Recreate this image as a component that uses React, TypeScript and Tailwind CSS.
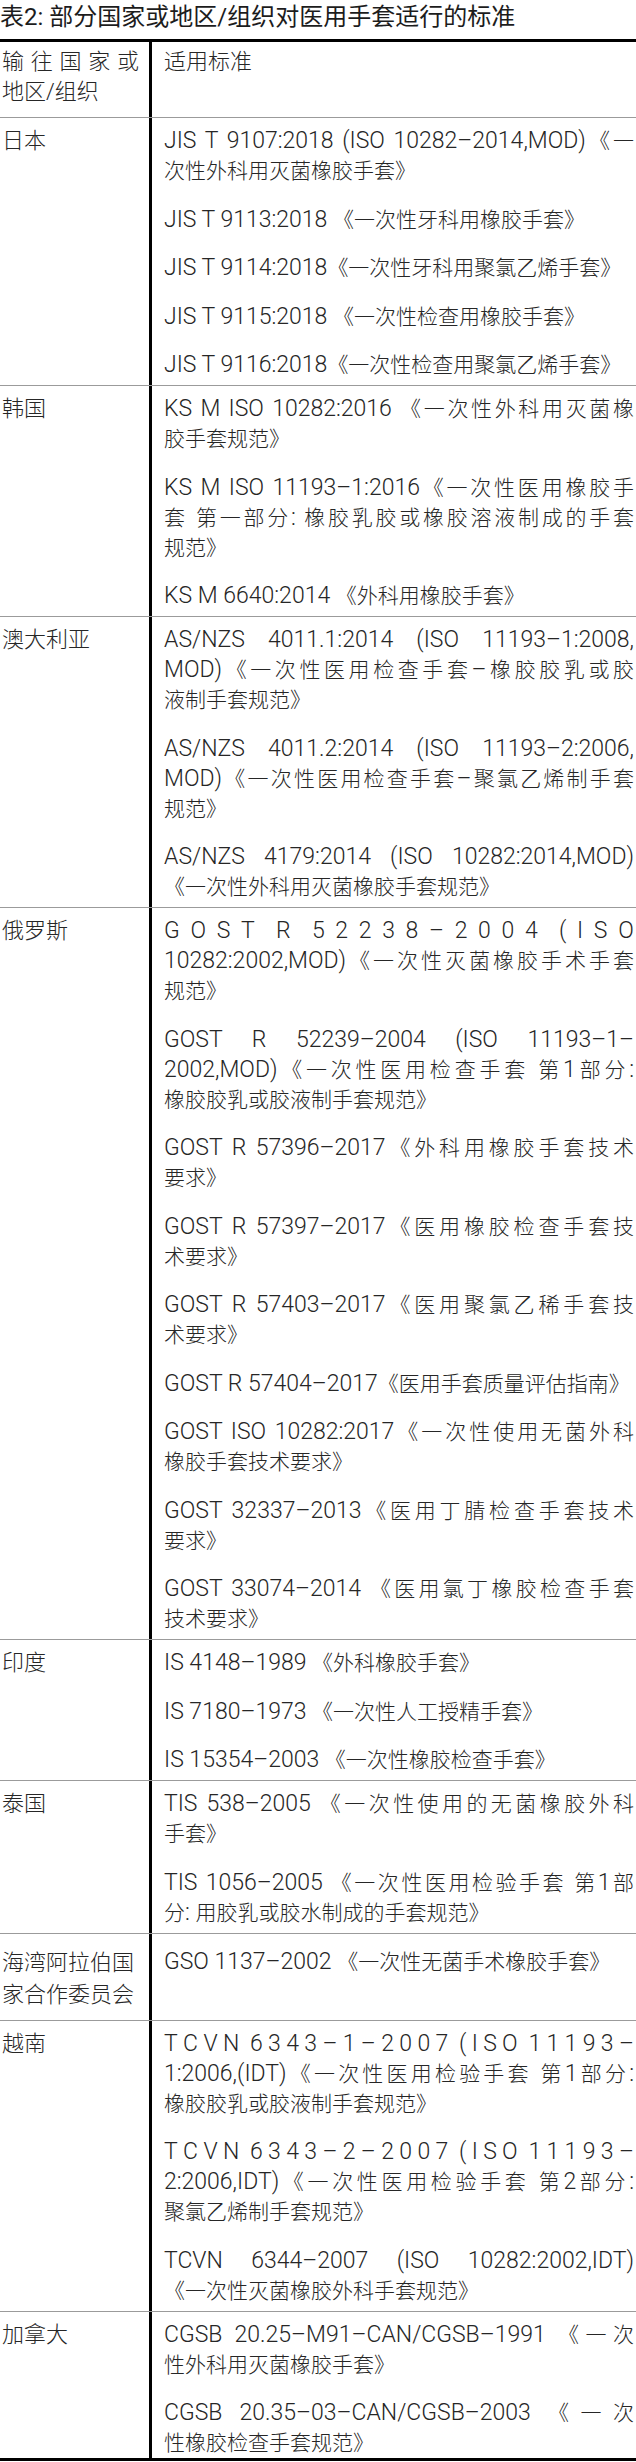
import React from 'react';

// A line is either plain text, or a line whose characters are spread over the full width
type Line = string | { spread: string };

interface Row {
  region: string[];
  items: Line[][];
  gulf?: boolean;
}

const rows: Row[] = [
  {
    region: ['日本'],
    items: [
      ['JIS T 9107:2018 (ISO 10282–2014,MOD)《一', '次性外科用灭菌橡胶手套》'],
      ['JIS T 9113:2018 《一次性牙科用橡胶手套》'],
      ['JIS T 9114:2018《一次性牙科用聚氯乙烯手套》'],
      ['JIS T 9115:2018 《一次性检查用橡胶手套》'],
      ['JIS T 9116:2018《一次性检查用聚氯乙烯手套》'],
    ],
  },
  {
    region: ['韩国'],
    items: [
      ['KS M ISO 10282:2016 《一次性外科用灭菌橡', '胶手套规范》'],
      ['KS M ISO 11193–1:2016《一次性医用橡胶手', '套 第一部分: 橡胶乳胶或橡胶溶液制成的手套', '规范》'],
      ['KS M 6640:2014 《外科用橡胶手套》'],
    ],
  },
  {
    region: ['澳大利亚'],
    items: [
      ['AS/NZS 4011.1:2014 (ISO 11193–1:2008,', 'MOD)《一次性医用检查手套–橡胶胶乳或胶', '液制手套规范》'],
      ['AS/NZS 4011.2:2014 (ISO 11193–2:2006,', 'MOD)《一次性医用检查手套–聚氯乙烯制手套', '规范》'],
      ['AS/NZS 4179:2014 (ISO 10282:2014,MOD)', '《一次性外科用灭菌橡胶手套规范》'],
    ],
  },
  {
    region: ['俄罗斯'],
    items: [
      [{ spread: 'GOST R 52238–2004 (ISO' }, '10282:2002,MOD)《一次性灭菌橡胶手术手套', '规范》'],
      ['GOST R 52239–2004 (ISO 11193–1–', '2002,MOD)《一次性医用检查手套 第1部分:', '橡胶胶乳或胶液制手套规范》'],
      ['GOST R 57396–2017《外科用橡胶手套技术', '要求》'],
      ['GOST R 57397–2017《医用橡胶检查手套技', '术要求》'],
      ['GOST R 57403–2017《医用聚氯乙稀手套技', '术要求》'],
      ['GOST R 57404–2017《医用手套质量评估指南》'],
      ['GOST ISO 10282:2017《一次性使用无菌外科', '橡胶手套技术要求》'],
      ['GOST 32337–2013《医用丁腈检查手套技术', '要求》'],
      ['GOST 33074–2014 《医用氯丁橡胶检查手套', '技术要求》'],
    ],
  },
  {
    region: ['印度'],
    items: [
      ['IS 4148–1989 《外科橡胶手套》'],
      ['IS 7180–1973 《一次性人工授精手套》'],
      ['IS 15354–2003 《一次性橡胶检查手套》'],
    ],
  },
  {
    region: ['泰国'],
    items: [
      ['TIS 538–2005 《一次性使用的无菌橡胶外科', '手套》'],
      ['TIS 1056–2005 《一次性医用检验手套 第1部', '分: 用胶乳或胶水制成的手套规范》'],
    ],
  },
  {
    region: ['海湾阿拉伯国', '家合作委员会'],
    gulf: true,
    items: [['GSO 1137–2002 《一次性无菌手术橡胶手套》']],
  },
  {
    region: ['越南'],
    items: [
      [{ spread: 'TCVN 6343–1–2007 (ISO 11193–' }, '1:2006,(IDT)《一次性医用检验手套 第1部分:', '橡胶胶乳或胶液制手套规范》'],
      [{ spread: 'TCVN 6343–2–2007 (ISO 11193–' }, '2:2006,IDT)《一次性医用检验手套 第2部分:', '聚氯乙烯制手套规范》'],
      ['TCVN 6344–2007 (ISO 10282:2002,IDT)', '《一次性灭菌橡胶外科手套规范》'],
    ],
  },
  {
    region: ['加拿大'],
    items: [
      ['CGSB 20.25–M91–CAN/CGSB–1991 《一次', '性外科用灭菌橡胶手套》'],
      ['CGSB 20.35–03–CAN/CGSB–2003 《一次', '性橡胶检查手套规范》'],
    ],
  },
];

// The Chinese runs are set a touch smaller than the Latin ones, as in the printed table
const CJK = /([\u2E80-\u9FFF\u3000-\u303F\uFF00-\uFFEF]+)/;

function Mixed({ text }: { text: string }) {
  return (
    <>
      {text.split(CJK).map((part, i) =>
        CJK.test(part) ? (
          <span key={i} className="text-[21px]">
            {part}
          </span>
        ) : (
          part
        ),
      )}
    </>
  );
}

function Spread({ text }: { text: string }) {
  return (
    <div className="flex justify-between">
      {Array.from(text).map((ch, i) => (
        <span key={i}>{ch === ' ' ? '' : ch}</span>
      ))}
    </div>
  );
}

function Entry({ lines }: { lines: Line[] }) {
  return (
    <div>
      {lines.map((line, i) => {
        if (typeof line !== 'string') return <Spread key={i} text={line.spread} />;
        const last = i === lines.length - 1;
        return (
          <div key={i} className={last ? 'whitespace-nowrap' : 'text-justify [text-align-last:justify]'}>
            <Mixed text={line} />
          </div>
        );
      })}
    </div>
  );
}

export default function App() {
  return (
    <div className="h-[2462px] w-[636px] overflow-hidden bg-white text-[#262626] font-['Roboto','Noto_Sans_CJK_SC',sans-serif] font-light">
      <div className="h-[39px] whitespace-nowrap text-[24px] leading-[34px] font-normal text-[#1c1c1c]">
        表2: 部分国家或地区/组织对医用手套适行的标准
      </div>

      <div className="border-t-[3px] border-b-[3px] border-black text-[22px] leading-[30px]">
        {/* Header */}
        <div className="grid grid-cols-[152px_1fr] border-b border-[#9b9b9b]">
          <div className="border-r-[3px] border-black pl-[2px] pr-[10px] pt-[5px] pb-[10px]">
            <div className="text-justify [text-align-last:justify]">输往国家或</div>
            <div>地区/组织</div>
          </div>
          <div className="pl-[12px] pr-[2px] pt-[5px] pb-[10px]">适用标准</div>
        </div>

        {rows.map((row, idx) => {
          const last = idx === rows.length - 1;
          return (
            <div
              key={row.region.join('')}
              className={last ? 'grid grid-cols-[152px_1fr]' : 'grid grid-cols-[152px_1fr] border-b border-[#9b9b9b]'}
            >
              <div
                className={
                  row.gulf
                    ? 'border-r-[3px] border-black pl-[2px] pt-[13px] pb-[9px] leading-[32px] whitespace-nowrap'
                    : 'border-r-[3px] border-black pl-[2px] pt-[8px] pb-[5px]'
                }
              >
                {row.region.map((r) => (
                  <div key={r}>{r}</div>
                ))}
              </div>
              <div
                className={
                  row.gulf
                    ? 'flex flex-col gap-[18.5px] pl-[12px] pr-[2px] pt-[13px] pb-[5px] text-[23px]'
                    : last
                      ? 'flex flex-col gap-[18.5px] pl-[12px] pr-[2px] pt-[8px] text-[23px]'
                      : 'flex flex-col gap-[18.5px] pl-[12px] pr-[2px] pt-[8px] pb-[5px] text-[23px]'
                }
              >
                {row.items.map((lines, i) => (
                  <Entry key={i} lines={lines} />
                ))}
              </div>
            </div>
          );
        })}
      </div>
    </div>
  );
}
